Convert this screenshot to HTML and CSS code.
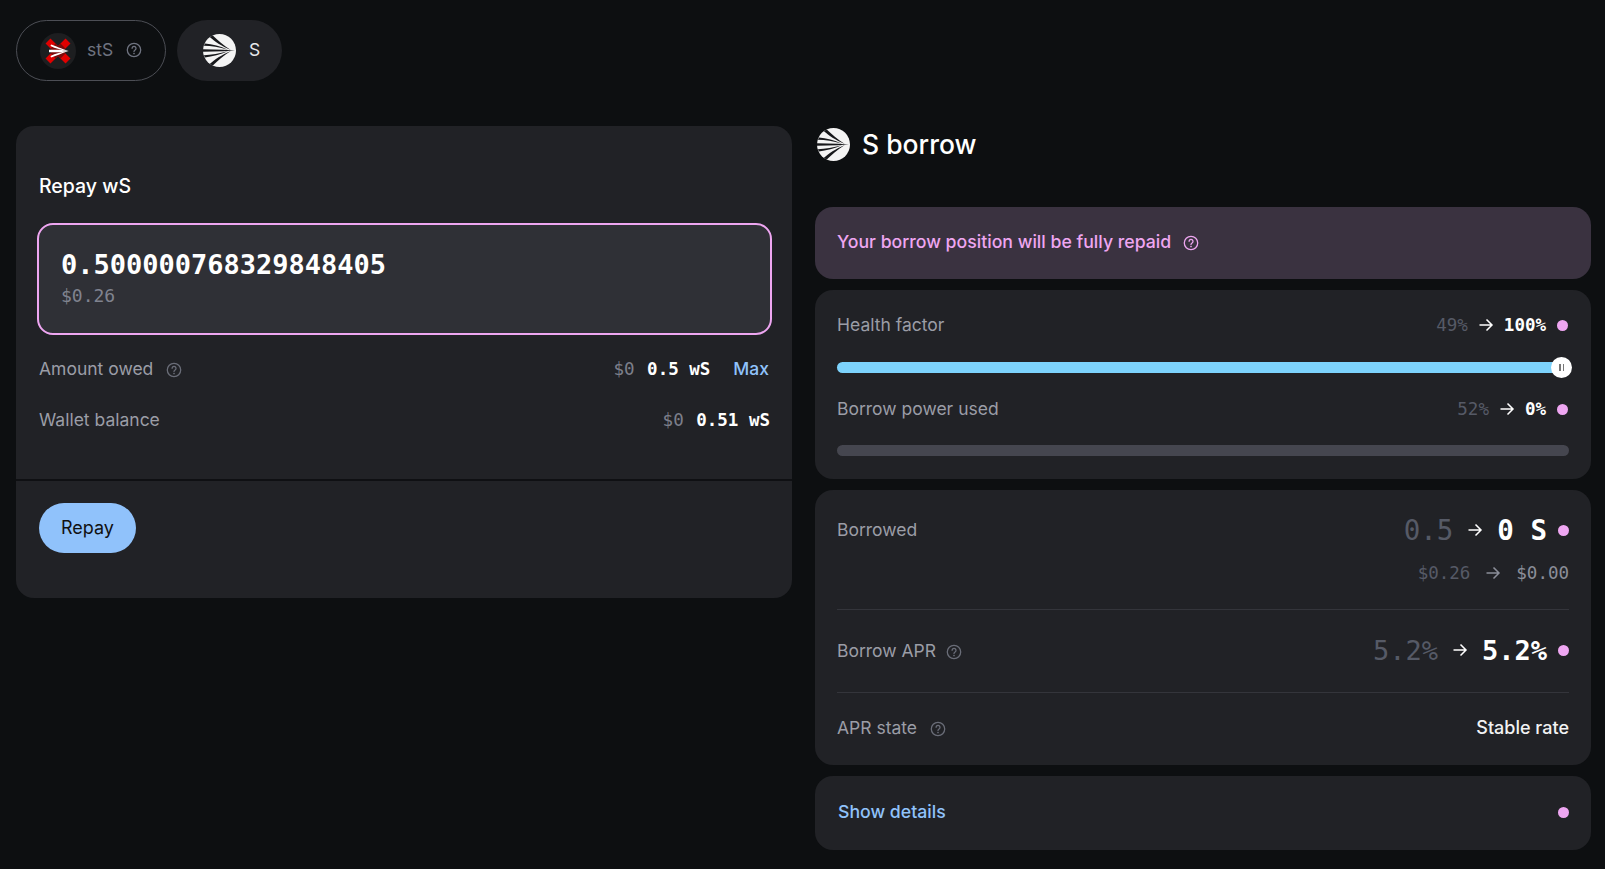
FILE: index.html
```html
<!DOCTYPE html>
<html lang="en">
<head>
<meta charset="utf-8">
<title>S borrow</title>
<link rel="stylesheet" href="styles.css">
</head>
<body>
<svg class="defs" width="0" height="0" aria-hidden="true">
  <defs>
    <symbol id="help" viewBox="0 0 16 16">
      <circle cx="8" cy="8" r="6.7" fill="none" stroke="currentColor" stroke-width="1.3"/>
      <path d="M6.1 6.3a1.95 1.95 0 1 1 3 1.65c-.7.45-1.1.8-1.1 1.6" fill="none" stroke="currentColor" stroke-width="1.3" stroke-linecap="round"/>
      <circle cx="8" cy="11.5" r=".85" fill="currentColor"/>
    </symbol>
    <symbol id="arrow" viewBox="0 0 16 16">
      <path d="M1.5 8h12.5M8.500 2.500 14 8l-5.500 5.500" fill="none" stroke="currentColor" stroke-width="1.5"/>
    </symbol>
    <symbol id="sonic" viewBox="0 0 32 32">
      <circle cx="16" cy="16" r="16" fill="#f4f4f4"/>
      <path d="M0 14.700 20 15.200 31 16 20 16.800 0 17.300z" fill="#17181b"/>
      <path d="M27 15.600C20 11 14 6 9.500 1.500L6.500 3C11 7 18 12 27 15.600z" fill="#17181b"/>
      <path d="M24 15.200C17 12 9 10 1.800 9.300L.9 11.500C8 11.500 16 13 24 15.200z" fill="#17181b"/>
      <path d="M27 16.400C20 21 14 26 9.500 30.500L6.500 29C11 25 18 20 27 16.400z" fill="#17181b"/>
      <path d="M24 16.800C17 20 9 22 1.800 22.700L.9 20.500C8 20.500 16 19 24 16.800z" fill="#17181b"/>
    </symbol>
  </defs>
</svg>

<main class="page">
  <nav class="tabs">
    <div class="tab tab-outline">
      <svg class="tab-logo" viewBox="0 0 36 36" aria-hidden="true">
        <circle cx="18" cy="18" r="18" fill="#1d1e20"/>
        <path d="M8 8 28 28M28 8 8 28" stroke="#e00000" stroke-width="7"/>
        <path d="M13 13 23 23M23 13 13 23" stroke="#7c0a0a" stroke-width="7"/>
        <path d="M9 16.800H20L29 18 20 19.200H9z" fill="#fff"/>
        <path d="M11 11.500C15 13 22 15.500 28 18 22 17 15 15.500 10.500 13z" fill="#fff"/>
        <path d="M11 24.500C15 23 22 20.500 28 18 22 19 15 20.500 10.500 23z" fill="#fff"/>
      </svg>
      <span class="tab-label muted">stS</span>
      <svg class="help tab-help"><use href="#help"/></svg>
    </div>
    <div class="tab tab-filled">
      <svg class="tab-logo-s"><use href="#sonic"/></svg>
      <span class="tab-label">S</span>
    </div>
  </nav>

  <div class="columns">
    <section class="card form">
      <div class="form-body">
        <h2 class="form-title">Repay wS</h2>
        <div class="input">
          <div class="input-value mono">0.500000768329848405</div>
          <div class="input-usd mono">$0.26</div>
        </div>
        <div class="form-row">
          <span class="label">Amount owed <svg class="help"><use href="#help"/></svg></span>
          <span class="values mono"><span class="usd">$0</span> <b>0.5 wS</b><a class="max">Max</a></span>
        </div>
        <div class="form-row">
          <span class="label">Wallet balance</span>
          <span class="values mono"><span class="usd">$0</span> <b>0.51 wS</b></span>
        </div>
      </div>
      <div class="form-foot">
        <button class="repay">Repay</button>
      </div>
    </section>

    <section class="side">
      <h1 class="side-title"><svg class="side-logo"><use href="#sonic"/></svg>S borrow</h1>
      <div class="stack">
        <div class="alert">Your borrow position will be fully repaid <svg class="help"><use href="#help"/></svg></div>

        <div class="card meters">
          <div class="row">
            <span class="label">Health factor</span>
            <span class="change mono small"><span class="old">49%</span><svg class="arrow"><use href="#arrow"/></svg><b>100%</b><i class="dot"></i></span>
          </div>
          <div class="track track-blue"><span class="knob"><i></i><i></i></span></div>
          <div class="row row-power">
            <span class="label">Borrow power used</span>
            <span class="change mono small"><span class="old">52%</span><svg class="arrow"><use href="#arrow"/></svg><b>0%</b><i class="dot"></i></span>
          </div>
          <div class="track track-grey"></div>
        </div>

        <div class="card stats">
          <div class="stat stat-borrowed">
            <div class="row">
              <span class="label">Borrowed</span>
              <span class="change mono borrowed-value"><span class="old">0.5</span><svg class="arrow arrow-lg"><use href="#arrow"/></svg><b>0 S</b><i class="dot"></i></span>
            </div>
            <div class="sub mono"><span class="old">$0.26</span><svg class="arrow arrow-grey"><use href="#arrow"/></svg><span class="sub-new">$0.00</span></div>
          </div>
          <div class="stat stat-apr">
            <span class="label">Borrow APR <svg class="help"><use href="#help"/></svg></span>
            <span class="change mono large"><span class="old">5.2%</span><svg class="arrow arrow-lg"><use href="#arrow"/></svg><b>5.2%</b><i class="dot"></i></span>
          </div>
          <div class="stat stat-state">
            <span class="label">APR state <svg class="help"><use href="#help"/></svg></span>
            <span class="state">Stable rate</span>
          </div>
        </div>

        <div class="card details">
          <a class="details-link">Show details</a>
          <i class="dot"></i>
        </div>
      </div>
    </section>
  </div>
</main>
</body>
</html>
```

FILE: styles.css
```css
* { box-sizing: border-box; }
html, body { margin: 0; height: 100%; }
body {
  background: #0d0f11;
  color: #fff;
  font-family: "Inter", "Noto Sans", sans-serif;
  overflow: hidden;
}
.defs { position: absolute; }
.mono { font-family: "DejaVu Sans Mono", "Liberation Mono", monospace; }
.page { padding: 20px 14px 0 16px; }

.tabs { display: flex; gap: 11px; height: 61px; }
.tab { display: flex; align-items: center; height: 61px; border-radius: 31px; font-size: 17.500px; }
.tab-outline { width: 150px; border: 1px solid #4c4e55; padding: 0 0 2px 23px; }
.tab-filled { width: 105px; background: #212226; padding: 0 0 2px 26px; }
.tab-logo { width: 36px; height: 36px; margin-top: 2px; }
.tab-logo-s { width: 33px; height: 33px; margin-top: 2px; }
.tab-label { margin-left: 11px; color: #e8e8ea; }
.tab-filled .tab-label { margin-left: 13px; }
.tab-label.muted { color: #6f7380; }

.help { width: 16px; height: 16px; color: #6a6d78; vertical-align: -3px; margin-left: 8px; }
.tab .tab-help { margin-left: 13px; margin-top: 0; color: #6f7380; }

.columns { display: grid; grid-template-columns: 776px 776px; column-gap: 23px; margin-top: 45px; align-items: start; }
.card { background: #212226; border-radius: 18px; }

.form { height: 472px; display: flex; flex-direction: column; }
.form-body { height: 355px; padding: 47px 22px 0 23px; border-bottom: 2px solid #0f1013; }
.form-title { margin: 0; font-size: 19.500px; line-height: 26px; font-weight: 500; }
.input { margin: 24px -2px 8px; height: 112px; border: 2px solid #eea6f1; border-radius: 16px; background: #2f3036; padding: 22px 20px 0 22px; }
.input-value { font-size: 27px; line-height: 36px; font-weight: 700; }
.input-usd { font-size: 18px; line-height: 26px; color: #80838f; }
.form-row { display: flex; justify-content: space-between; align-items: center; height: 51px; }
.label { font-size: 17.500px; color: #9b9da6; white-space: nowrap; }
.values { font-size: 17.500px; white-space: nowrap; }
.values b { font-weight: 700; margin-left: 2px; }
.usd { color: #7c7f8a; }
.max { font-family: "Inter", sans-serif; color: #90c2fb; font-size: 17.500px; margin: 0 1px 0 23px; font-weight: 500; }
.form-foot { padding: 22px 23px 0; }
.repay { display: block; width: 97px; height: 50px; padding: 0 0 2px; border: 0; border-radius: 25px; background: #90c2fb; color: #111; font: 400 18px "Inter", sans-serif; }

.side-title { display: flex; align-items: center; margin: 2px 0 0 2px; height: 32px; padding-bottom: 1px; font-size: 26.500px; font-weight: 500; }
.side-logo { width: 33px; height: 33px; margin-right: 12px; margin-top: 1px; flex: none; }
.stack { display: flex; flex-direction: column; gap: 11px; margin-top: 47px; }
.alert { height: 72px; padding: 0 22px 3px; display: flex; align-items: center; background: #3a3240; border-radius: 18px; color: #eea6f1; font-size: 17.700px; font-weight: 500; }
.alert .help { color: #eea6f1; margin-left: 12px; margin-top: 3px; }

.stack .label { padding-bottom: 2px; }
.row { display: flex; justify-content: space-between; align-items: center; }
.change { display: flex; align-items: center; white-space: nowrap; }
.change b { font-weight: 700; }
.old { color: #565a66; }
.dot { display: block; width: 11px; height: 11px; border-radius: 50%; background: #eea6f1; }
.arrow { width: 16px; height: 16px; color: #fff; margin: 0 10px; }
.arrow-lg { margin: 0 14px; }
.arrow-grey { color: #8b8e99; margin: 0 15px; }

.small { font-size: 17.500px; padding-right: 1px; }
.small .dot { margin-left: 11px; }
.large { font-size: 27px; padding-bottom: 2px; }
.borrowed-value { font-size: 27.500px; }
.large .dot, .borrowed-value .dot { margin-left: 11px; }

.meters { height: 189px; padding: 24px 22px 0; }
.meters .row { height: 22px; }
.track { position: relative; height: 11px; border-radius: 6px; }
.track-blue { margin-top: 26px; background: #7dd3fc; }
.track-grey { margin-top: 25px; background: #45464f; }
.row-power { margin-top: 25px; }
.knob { position: absolute; right: -3px; top: 50%; width: 21px; height: 21px; margin-top: -10.500px; border-radius: 50%; background: #fff; display: flex; justify-content: center; align-items: center; gap: 2px; }
.knob i { width: 1.500px; height: 7px; background: #777; }

.stats { height: 275px; padding: 0 22px; }
.stat-borrowed { height: 120px; padding-top: 22px; border-bottom: 1px solid #34353b; }
.stat-borrowed .row { height: 36px; }
.sub { display: flex; justify-content: flex-end; align-items: center; margin-top: 15px; font-size: 17.500px; }
.sub-new { color: #8b8e99; }
.stat-apr { height: 83px; display: flex; justify-content: space-between; align-items: center; border-bottom: 1px solid #34353b; }
.stat-apr .help { margin-left: 5px; }
.stat-state { height: 71px; display: flex; justify-content: space-between; align-items: center; }
.state { font-size: 18px; font-weight: 500; color: #f2f2f3; padding-bottom: 2px; }

.details { height: 74px; padding: 0 22px 3px 23px; display: flex; justify-content: space-between; align-items: center; }
.details .dot { margin-top: 2px; }
.details-link { color: #90c2fb; font-size: 17.700px; font-weight: 500; }
```
